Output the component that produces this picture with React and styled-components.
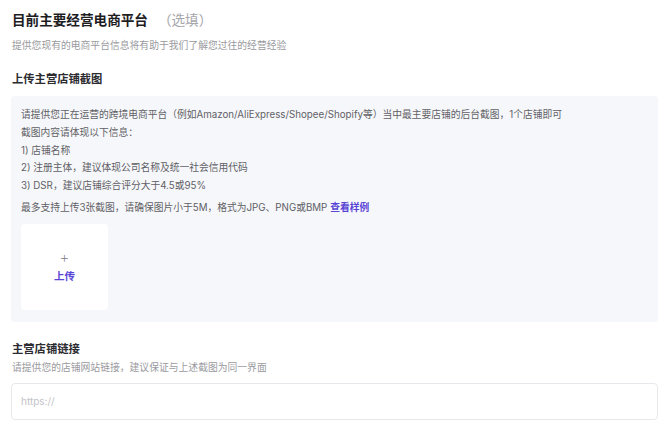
import React from "react";
import styled, { createGlobalStyle } from "styled-components";

const GlobalStyle = createGlobalStyle`
  html, body {
    margin: 0;
    padding: 0;
    background: #ffffff;
  }
  body {
    font-family: "Inter", "Noto Sans CJK SC", sans-serif;
  }
`;

const Page = styled.div`
  padding: 10px 10px 0 11px;
  width: 647px;
`;

const Title = styled.h1`
  margin: 0 0 0 1px;
  font-size: 13.6px;
  line-height: 20px;
  font-weight: 700;
  color: #1d1d1f;
`;

const Optional = styled.span`
  margin-left: 10px;
  font-weight: 400;
  color: #a6a6ab;
`;

const Hint = styled.p`
  margin: ${(p) => p.$top || 0}px 0 0 1px;
  font-size: 9.8px;
  line-height: 14px;
  color: #9a9aa0;
`;

const SectionTitle = styled.h2`
  margin: ${(p) => p.$top}px 0 0 1px;
  font-size: 11.3px;
  line-height: 16px;
  font-weight: 700;
  color: #2b2b30;
`;

const InfoBox = styled.div`
  margin-top: 9px;
  background: #f6f7fa;
  border-radius: 3px;
  padding: 10px 10px 12px 10px;
`;

const InfoLine = styled.div`
  font-size: 9.75px;
  line-height: 17.8px;
  color: #5f5f66;
  margin-top: ${(p) => p.$top || 0}px;
  white-space: nowrap;
`;

const Link = styled.a`
  color: #5a46d6;
  font-weight: 700;
  text-decoration: none;
  margin-left: 3px;
`;

const UploadTile = styled.div`
  margin-top: 7px;
  width: 87px;
  height: 86px;
  background: #ffffff;
  border-radius: 4px;
  display: flex;
  flex-direction: column;
  align-items: center;
  justify-content: center;
  gap: 4px;
`;

const Plus = styled.span`
  font-size: 16px;
  line-height: 16px;
  font-weight: 200;
  color: #7a7a80;
`;

const UploadLabel = styled.span`
  font-size: 10.5px;
  line-height: 16px;
  font-weight: 700;
  color: #5a46d6;
`;

const UrlInput = styled.input`
  margin-top: 8px;
  box-sizing: border-box;
  width: 100%;
  height: 37px;
  border: 1px solid #e8e8ec;
  border-radius: 4px;
  padding: 0 9px;
  font-family: inherit;
  font-size: 10px;
  color: #333;
  background: #fff;
  outline: none;

  &::placeholder {
    color: #c3c3c8;
  }
`;

const App = () => {
  return (
    <Page>
      <GlobalStyle />
      <Title>
        目前主要经营电商平台<Optional>（选填）</Optional>
      </Title>
      <Hint $top={9}>提供您现有的电商平台信息将有助于我们了解您过往的经营经验</Hint>

      <SectionTitle $top={18}>上传主营店铺截图</SectionTitle>
      <InfoBox>
        <InfoLine>
          请提供您正在运营的跨境电商平台（例如Amazon/AliExpress/Shopee/Shopify等）当中最主要店铺的后台截图，1个店铺即可
        </InfoLine>
        <InfoLine>截图内容请体现以下信息：</InfoLine>
        <InfoLine>1) 店铺名称</InfoLine>
        <InfoLine>2) 注册主体，建议体现公司名称及统一社会信用代码</InfoLine>
        <InfoLine>3) DSR，建议店铺综合评分大于4.5或95%</InfoLine>
        <InfoLine $top={4}>
          最多支持上传3张截图，请确保图片小于5M，格式为JPG、PNG或BMP
          <Link href="#">查看样例</Link>
        </InfoLine>
        <UploadTile>
          <Plus>+</Plus>
          <UploadLabel>上传</UploadLabel>
        </UploadTile>
      </InfoBox>

      <SectionTitle $top={19}>主营店铺链接</SectionTitle>
      <Hint $top={4}>请提供您的店铺网站链接，建议保证与上述截图为同一界面</Hint>
      <UrlInput placeholder="https://" />
    </Page>
  );
};

export default App;
